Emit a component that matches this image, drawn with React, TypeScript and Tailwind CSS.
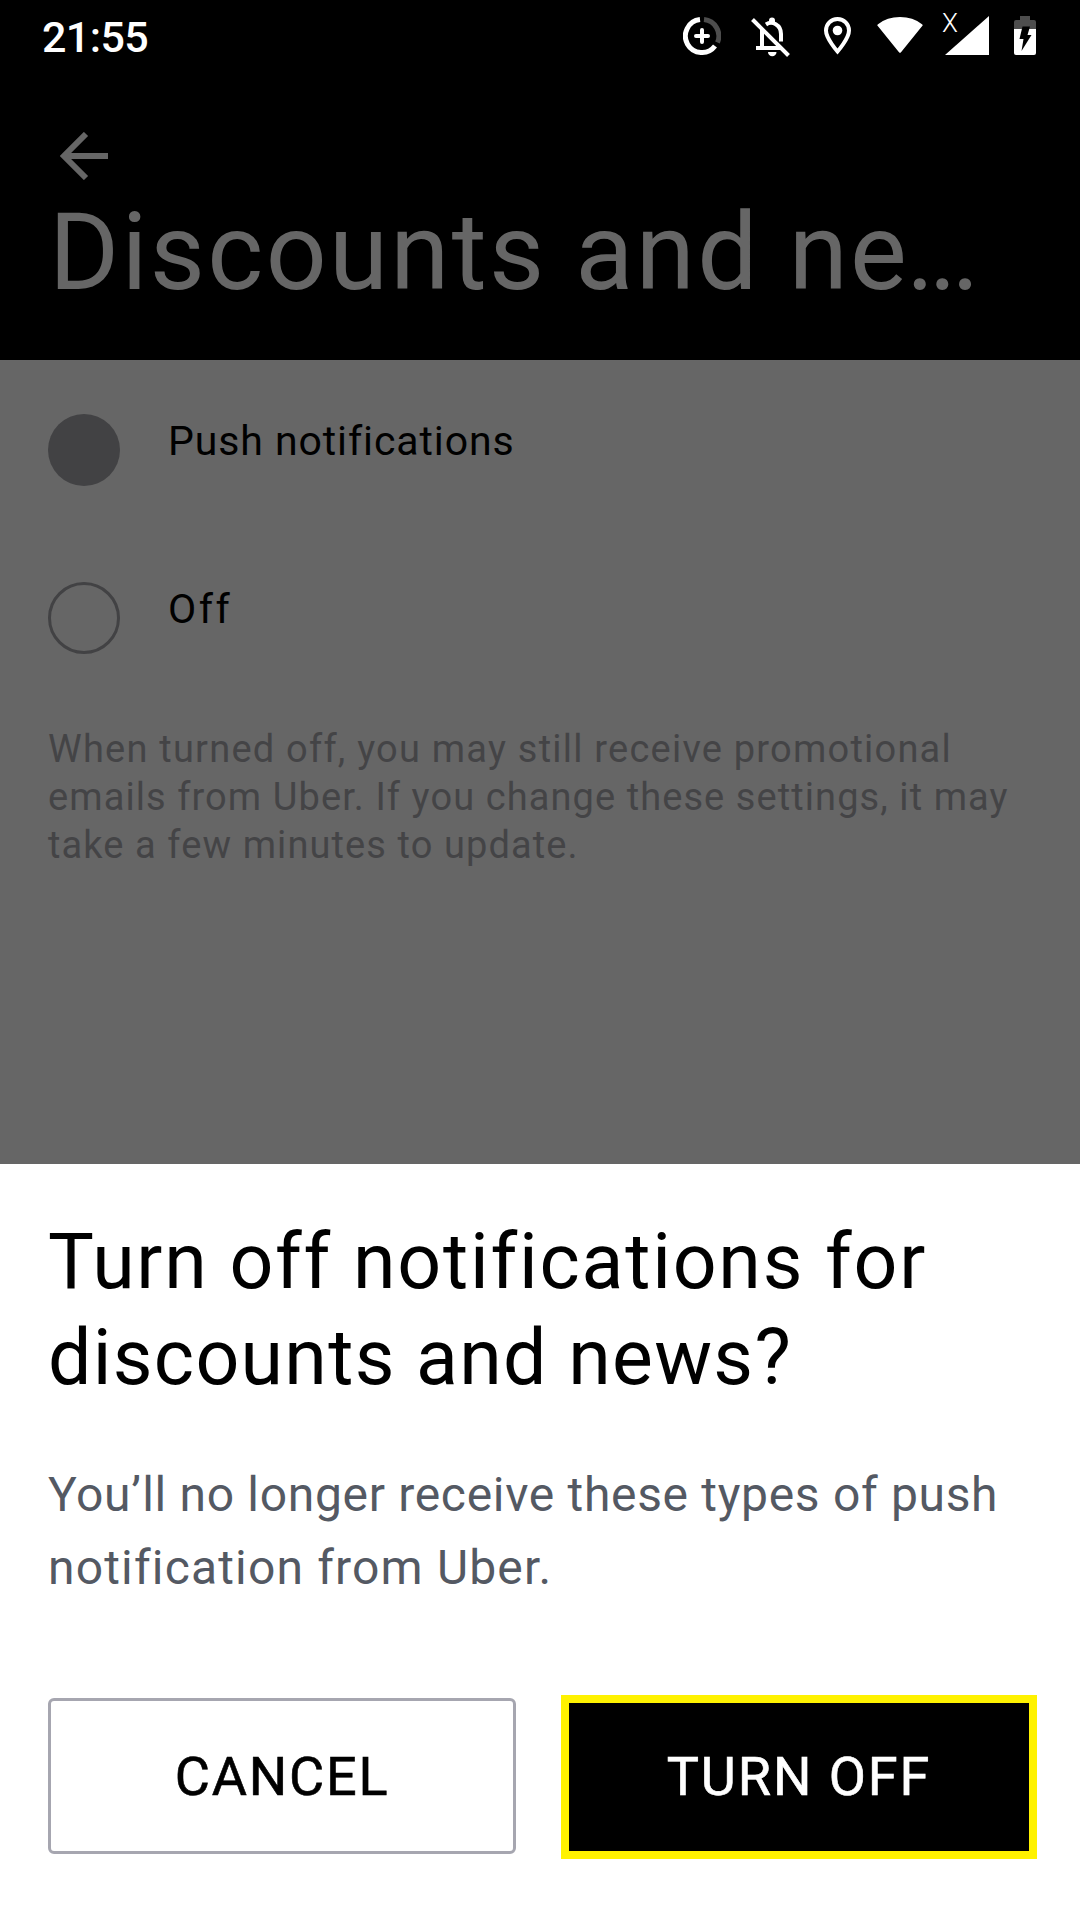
import type { ReactNode } from "react"

interface OptionRowProps {
  label: ReactNode
  selected: boolean
}

function DataSaverIcon() {
  return (
    <svg className="w-[38px] h-[38px]" viewBox="0 0 38 38" fill="none" strokeWidth="5">
      <path d="M21 2.600A16.500 16.500 0 0 1 34.500 25.500" stroke="#4d4d4d" />
      <path d="M17 2.600A16.500 16.500 0 1 0 32 29" stroke="#fff" />
      <path d="M19 13v12M13 19h12" stroke="#fff" strokeWidth="4" strokeLinecap="round" />
    </svg>
  )
}

function BellOffIcon() {
  return (
    <svg className="w-[39px] h-[40px]" viewBox="0 0 39 40" fill="none" stroke="#fff">
      <path d="M11 12V31M5 31H30" strokeWidth="4" />
      <path d="M15 7.500C21 3.500 30 7.500 30 17v7.500" strokeWidth="4" />
      <path d="M18 6V3.500a3 3 0 0 1 6 0V6z" fill="#fff" stroke="none" />
      <path d="M17 35h8.500a4.200 4.200 0 0 1-8.500 0z" fill="#fff" stroke="none" />
      <path d="M1.500 2.500L37.500 38.500" strokeWidth="4" />
    </svg>
  )
}

function PinIcon() {
  return (
    <svg className="w-[27px] h-[38px]" viewBox="0 0 27 38">
      <path
        d="M13.500 2C7 2 2 7 2 13.500C2 21.500 13.500 34.500 13.500 34.500S25 21.500 25 13.500C25 7 20 2 13.500 2z"
        fill="none"
        stroke="#fff"
        strokeWidth="4"
      />
      <circle cx="13.500" cy="13.500" r="4.800" fill="#fff" />
    </svg>
  )
}

function WifiIcon() {
  return (
    <svg className="w-[46px] h-[36px]" viewBox="0 0 46 36" fill="#fff">
      <path d="M0.800 9Q-0.200 8 1 7.200Q10 0 23 0T45 7.200Q46.200 8 45.200 9L24 35.200Q23 36.400 22 35.200z" />
    </svg>
  )
}

function SignalIcon() {
  return (
    <div className="flex items-start h-[42px]">
      <span className="w-[3px] text-[26px] leading-[19px] font-light whitespace-nowrap">X</span>
      <svg className="w-[44px] h-[42px]" viewBox="0 0 44 42" fill="#fff">
        <path d="M0 41L44 2V41z" />
      </svg>
    </div>
  )
}

function BatteryIcon() {
  return (
    <svg className="w-[22px] h-[39px]" viewBox="0 0 22 39">
      <path d="M6 0H16V4H20Q22 4 22 6V13H0V6Q0 4 2 4H6z" fill="#4d4d4d" />
      <path d="M0 13H22V37Q22 39 20 39H2Q0 39 0 37z" fill="#fff" />
      <path d="M8.500 10.500H16L13.500 19H17.500L7.500 35L9.500 23H5.500z" fill="#000" />
    </svg>
  )
}

function StatusBar() {
  return (
    <div className="h-[72px] pl-[42px] pr-[44px] flex items-center justify-between text-white">
      <span className="pt-[2px] text-[43px] leading-[70px] font-medium tracking-[-0.600px]">21:55</span>
      <div className="flex items-center">
        <DataSaverIcon />
        <div className="ml-[30px] mt-[2px]"><BellOffIcon /></div>
        <div className="ml-[34px]"><PinIcon /></div>
        <div className="ml-[26px] mb-[2px]"><WifiIcon /></div>
        <div className="ml-[19px] mb-[2px]"><SignalIcon /></div>
        <div className="ml-[25px] mb-px"><BatteryIcon /></div>
      </div>
    </div>
  )
}

function OptionRow({ label, selected }: OptionRowProps) {
  return (
    <div className="h-[168px] flex items-start">
      <div
        className={
          selected
            ? "w-[72px] h-[72px] rounded-full bg-[#424244]"
            : "w-[72px] h-[72px] rounded-full border-[3px] border-[#424244]"
        }
      />
      <span className="ml-12 pt-[2px] text-[41px] leading-[50px] text-black">{label}</span>
    </div>
  )
}

function Line({ children, className }: { children: ReactNode; className: string }) {
  return <span className={`block whitespace-nowrap ${className}`}>{children}</span>
}

export default function App() {
  return (
    <div className="w-[1080px] h-[1920px] flex flex-col overflow-hidden bg-[#666666] font-[Roboto,sans-serif] font-normal">
      {/* Header */}
      <header className="h-[360px] bg-black text-[#666666]">
        <StatusBar />
        <svg className="w-[48px] h-[48px] mt-[60px] ml-[60px]" viewBox="0 0 48 48" fill="none" stroke="currentColor" strokeWidth="6">
          <path d="M48 24H6M26 2L4 24L26 46" />
        </svg>
        <h1 className="ml-[49px] mt-[8px] text-[107px] leading-[130px] tracking-[2.300px] whitespace-nowrap">
          Discounts and ne<span className="-ml-[3px] tracking-[-5.500px]">...</span>
        </h1>
      </header>

      {/* Options */}
      <main className="h-[804px] px-12 pt-[54px]">
        <OptionRow label={<Line className="tracking-[0.900px]">Push notifications</Line>} selected />
        <OptionRow label={<Line className="tracking-[2.500px]">Off</Line>} selected={false} />
        <p className="-mt-[25px] text-[38px] leading-[48px] text-[#444446]">
          <Line className="tracking-[1.220px]">When turned off, you may still receive promotional</Line>
          <Line className="tracking-[1.080px]">emails from Uber. If you change these settings, it may</Line>
          <Line className="tracking-[1.100px]">take a few minutes to update.</Line>
        </p>
      </main>

      {/* Bottom sheet */}
      <section className="flex-1 bg-white px-12 pt-[50px]">
        <h2 className="text-[77px] leading-[96px] text-black">
          <Line className="tracking-[1.770px]">Turn off notifications for</Line>
          <Line className="tracking-[1.300px]">discounts and news?</Line>
        </h2>
        <p className="mt-[52px] text-[48px] leading-[73px] text-[#545963]">
          <Line className="tracking-[0.680px]">You’ll no longer receive these types of push</Line>
          <Line className="tracking-[1.170px]">notification from Uber.</Line>
        </p>
        <div className="mt-[91px] flex items-start">
          <button className="shrink-0 mt-[3px] w-[468px] h-[156px] rounded-md border-[3px] border-[#a6a6b0] text-[54px] tracking-[1.800px] [-webkit-text-stroke:0.600px_black] text-black">
            CANCEL
          </button>
          <button className="shrink-0 ml-[45px] w-[476px] h-[164px] pb-[2px] border-8 border-[#fff200] bg-black text-[54px] tracking-[1.900px] [-webkit-text-stroke:0.600px_white] text-white">
            TURN OFF
          </button>
        </div>
      </section>
    </div>
  )
}
